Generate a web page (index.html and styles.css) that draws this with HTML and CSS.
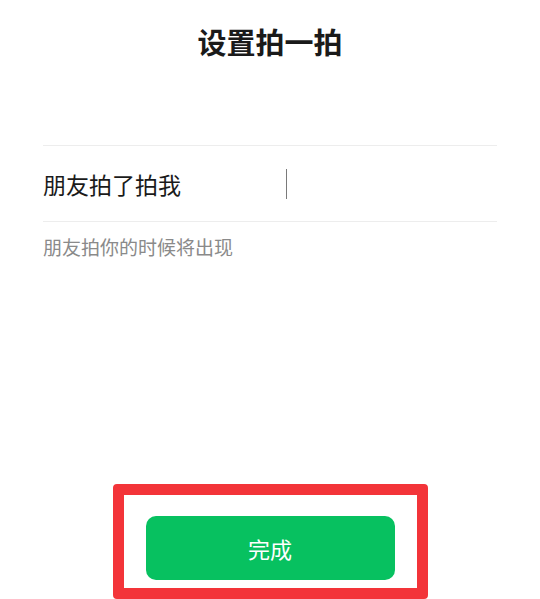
FILE: index.html
```html
<!DOCTYPE html>
<html lang="zh-CN">
<head>
<meta charset="utf-8">
<title>设置拍一拍</title>
<link rel="stylesheet" href="styles.css">
</head>
<body>
  <div class="page">
    <h1 class="title">设置拍一拍</h1>
    <div class="field">
      <div class="field-row">
        <span class="field-text">朋友拍了拍我</span>
        <span class="cursor"></span>
      </div>
    </div>
    <p class="hint">朋友拍你的时候将出现</p>
    <div class="highlight">
      <button class="done-btn">完成</button>
    </div>
  </div>
</body>
</html>
```

FILE: styles.css
```css
html, body {
  margin: 0;
  padding: 0;
  background: #ffffff;
}

body {
  font-family: "Noto Sans CJK SC", "Noto Sans", sans-serif;
  color: #1a1a1a;
}

.page {
  width: 540px;
  height: 599px;
  overflow: hidden;
  display: flex;
  flex-direction: column;
}

.title {
  margin: 0;
  padding-top: 21px;
  height: 40px;
  line-height: 40px;
  font-size: 29px;
  font-weight: 700;
  text-align: center;
  color: #1a1a1a;
}

.field {
  margin: 84px 43px 0 43px;
  border-top: 1px solid #ededed;
  border-bottom: 1px solid #ededed;
}

.field-row {
  height: 75px;
  display: flex;
  align-items: center;
}

.field-text {
  font-size: 23px;
  line-height: 30px;
  color: #1a1a1a;
  width: 243px;
}

.cursor {
  width: 1px;
  height: 30px;
  background: #7a7a7a;
}

.hint {
  margin: 10px 43px 0 43px;
  font-size: 19px;
  line-height: 30px;
  color: #8a8a8a;
}

.highlight {
  margin: 222px auto 0 auto;
  width: 249px;
  height: 72px;
  border: 11px solid #f33439;
  border-radius: 4px;
  padding: 21px 22px 0 22px;
  box-sizing: content-box;
  flex-shrink: 0;
}

.done-btn {
  display: block;
  width: 249px;
  height: 64px;
  border: none;
  border-radius: 10px;
  background: #07c160;
  color: #ffffff;
  font-family: "Noto Sans CJK SC", "Noto Sans", sans-serif;
  font-size: 22px;
  padding: 0;
}
```
